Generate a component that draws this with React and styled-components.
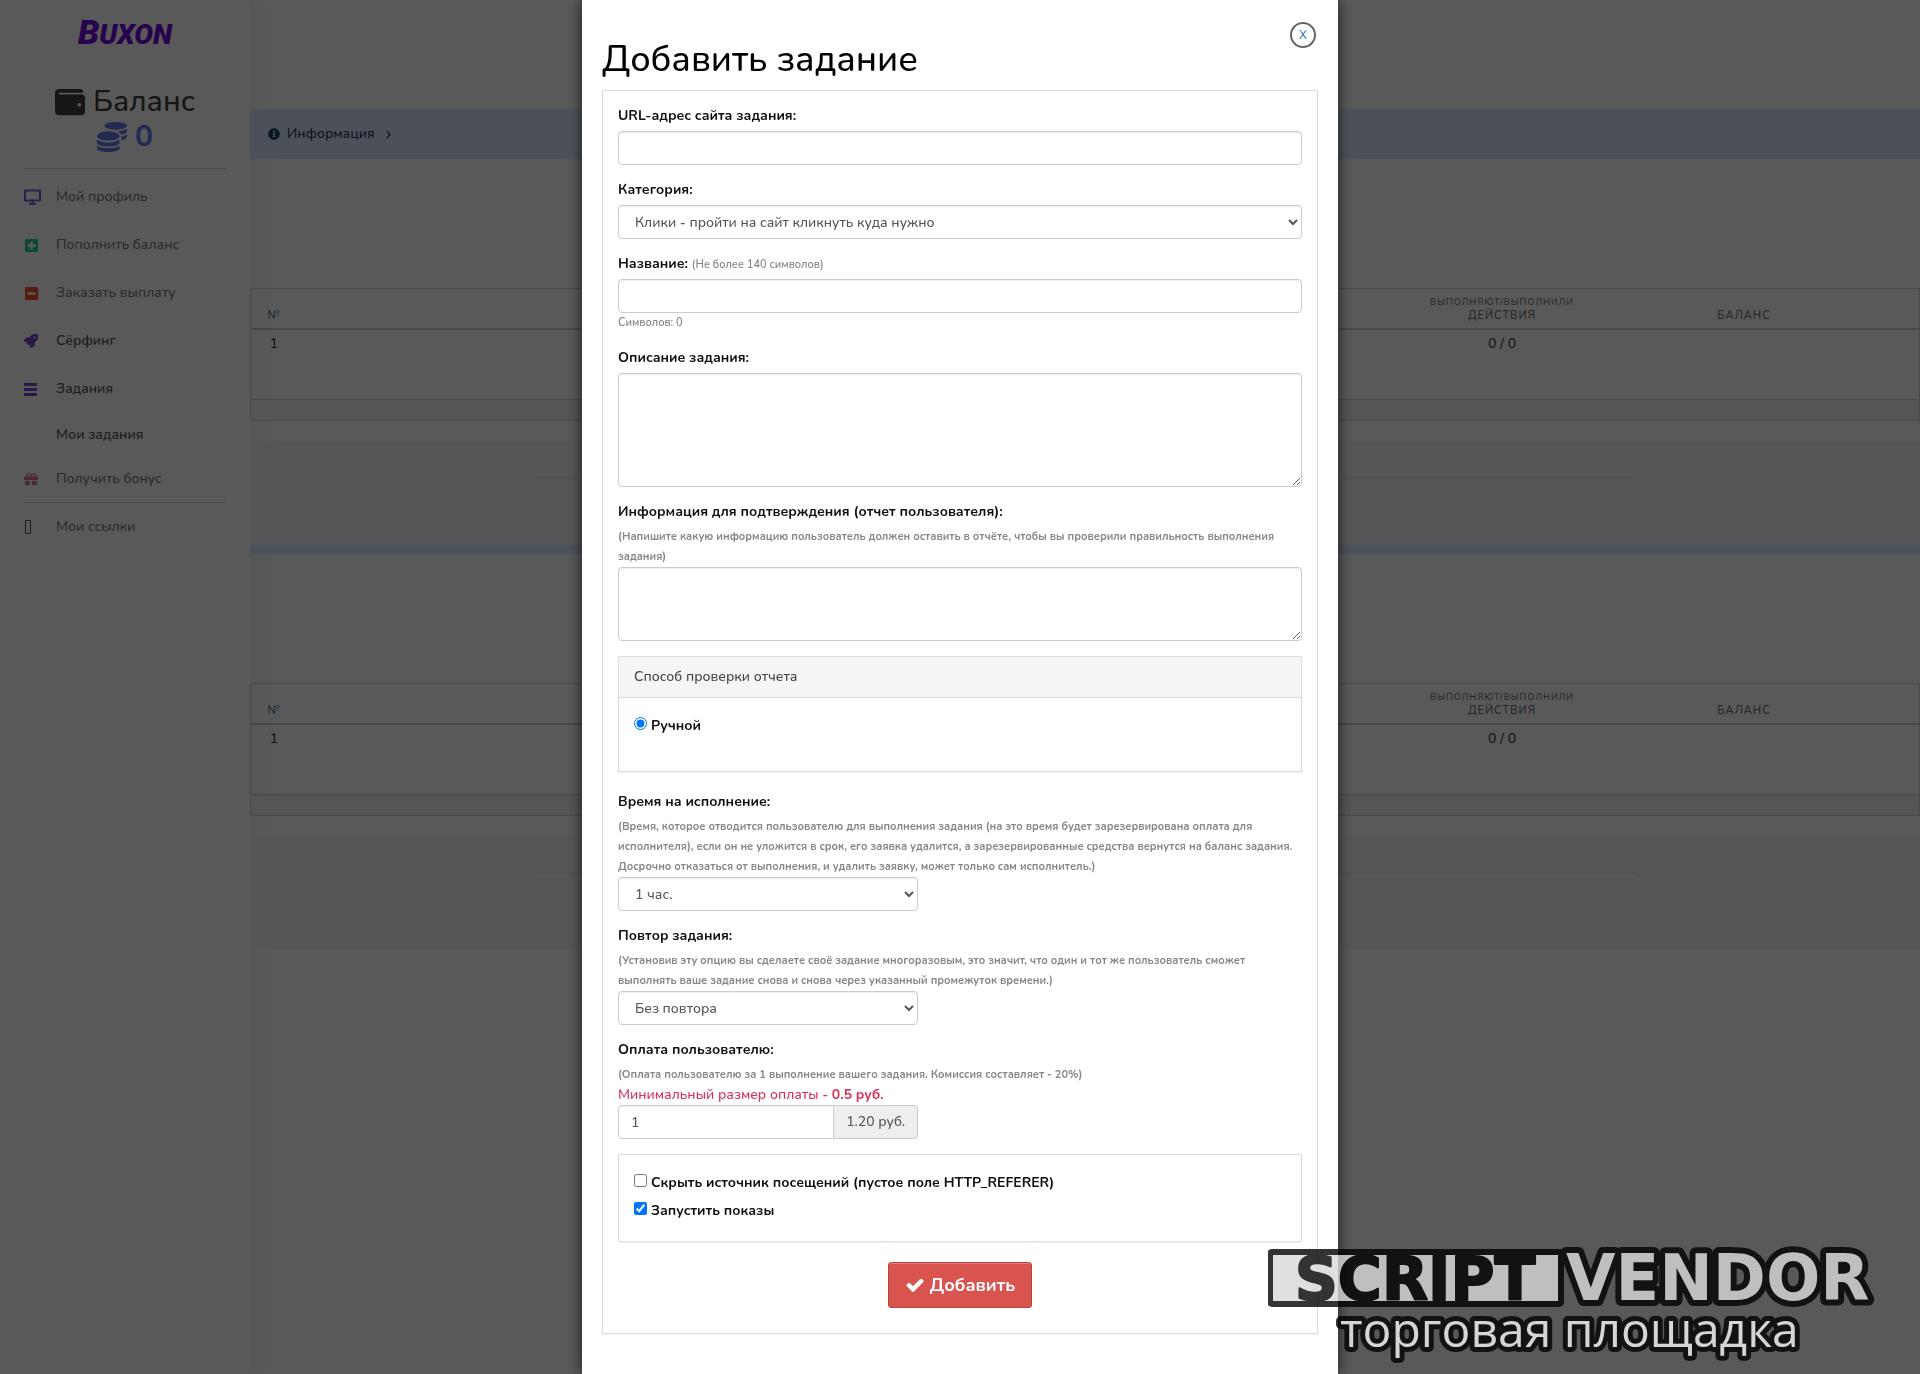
import React from "react";
import styled, { createGlobalStyle } from "styled-components";
import { FaWallet, FaCoins, FaPlusSquare, FaMinusSquare, FaRocket, FaGift, FaInfoCircle } from "react-icons/fa";
import { ChevronRight } from "lucide-react";

const GlobalStyle = createGlobalStyle`
  *, *::before, *::after { box-sizing: border-box; }
  body {
    margin: 0;
    background: #fff;
    color: #525f7f;
    font-family: Nunito, Lato, "Noto Sans", sans-serif;
    font-size: 14px;
    font-weight: 500;
    line-height: 20px;
  }
  button, input, select, textarea { font: inherit; }
`;

const Page = styled.div`
  display: grid;
  grid-template-columns: 250px minmax(0, 1fr);
  min-height: 100vh;
`;

const Sidebar = styled.aside`
  padding: 12px 24px;
  background: #fff;
  box-shadow: 0 0 32px rgba(136, 152, 170, 0.15);
`;

const Logo = styled.a`
  display: flex;
  justify-content: center;
  align-items: baseline;
  height: 40px;
  color: #7006dc;
  font-family: Roboto, sans-serif;
  font-size: 28px;
  font-style: italic;
  font-weight: 900;
  line-height: 40px;
  text-decoration: none;
`;

const LogoInitial = styled.span`
  font-size: 34px;
`;

const Balance = styled.section`
  display: flex;
  flex-direction: column;
  align-items: center;
  padding: 32px 0 14px;
  border-bottom: 1px solid #d9dbe0;
  font-size: 30px;
  line-height: 35px;
`;

const BalanceLine = styled.div`
  display: flex;
  align-items: center;
  gap: 8px;
  color: ${(p) => (p.$accent ? "#6679ea" : "#404040")};
  font-weight: ${(p) => (p.$accent ? 700 : 500)};
`;

const Menu = styled.nav`
  display: flex;
  flex-direction: column;
  padding-top: 4px;
`;

const MenuItem = styled.a`
  display: flex;
  align-items: center;
  height: ${(p) => (p.$compact ? 44 : 48)}px;
  color: ${(p) => (p.$strong ? "#5a5a5a" : "#7a7a7a")};
  font-weight: ${(p) => (p.$strong ? 600 : 500)};
  text-decoration: none;
`;

const MenuIcon = styled.span`
  display: flex;
  width: 32px;
  color: ${(p) => p.$color};
`;

const MenuDivider = styled.hr`
  width: 100%;
  margin: 1px 0 0;
  border: 0;
  border-top: 1px solid #d9dbe0;
`;

const Main = styled.main`
  padding-top: 109px;
`;

const InfoBar = styled.a`
  display: flex;
  align-items: center;
  gap: 7px;
  height: 50px;
  padding: 0 18px;
  background: #dbe9ff;
  color: #28384d;
  text-decoration: none;
`;

const Section = styled.section`
  padding-top: 129px;
`;

const TaskTable = styled.table`
  width: 100%;
  border: 1px solid #d0d3d8;
  border-collapse: separate;
  border-spacing: 0;
  table-layout: fixed;
  text-align: center;
`;

const Col = styled.col`
  width: ${(p) => p.$width || "auto"};
`;

const HeadCell = styled.th`
  height: 41px;
  padding: 0 0 5px;
  border-bottom: 2px solid #c9cdd3;
  color: ${(p) => (p.$link ? "#4a709c" : "#66707f")};
  font-size: 11px;
  font-weight: 500;
  letter-spacing: 1px;
  line-height: 14px;
  text-transform: uppercase;
  vertical-align: bottom;
`;

const HeadNote = styled.small`
  display: block;
  color: #70757d;
  font-size: 9px;
`;

const Cell = styled.td`
  height: 69px;
  padding: 4px 0;
  color: #3b4354;
  vertical-align: top;
`;

const FootCell = styled.td`
  height: 21px;
  border-top: 1px solid #c9cdd3;
  background: #f4f4f4;
`;

const FooterBlock = styled.footer`
  height: 113px;
  margin-top: 20px;
  padding-top: 36px;
  border-bottom: ${(p) => (p.$marked ? "9px solid #dbe9ff" : "0")};
  background: #f5f6fb;
`;

const FooterLine = styled.hr`
  width: 66%;
  margin: 0 auto;
  border: 0;
  border-top: 1px solid #e3e5ec;
`;

const Overlay = styled.div`
  position: fixed;
  inset: 0;
  display: flex;
  justify-content: center;
  align-items: flex-start;
  overflow: auto;
  background: rgba(0, 0, 0, 0.65);
`;

const Modal = styled.section`
  position: relative;
  width: 756px;
  max-width: 100%;
  min-height: 100%;
  padding: 40px 20px 20px;
  background: #fff;
  box-shadow: 0 0 14px rgba(0, 0, 0, 0.7);
  color: #444;
`;

const CloseButton = styled.button`
  position: absolute;
  top: 22px;
  right: 22px;
  width: 26px;
  height: 26px;
  padding: 0;
  border: 2px solid #666;
  border-radius: 50%;
  background: #fff;
  color: #337ab7;
  font-size: 12px;
  line-height: 20px;
`;

const Title = styled.h1`
  margin: 0 0 10px;
  color: #000;
  font-size: 36px;
  font-weight: 500;
  line-height: 40px;
`;

const FormPanel = styled.form`
  margin-bottom: 20px;
  padding: 15px 15px 25px;
  border: 1px solid #ddd;
  box-shadow: 0 1px 1px rgba(0, 0, 0, 0.05);
`;

const Field = styled.div`
  margin-bottom: 15px;
`;

const Label = styled.label`
  display: block;
  margin-bottom: 5px;
  color: #111;
  font-weight: 700;
`;

const Hint = styled.small`
  display: ${(p) => (p.$inline ? "inline" : "block")};
  color: #888;
  font-size: 11px;
  font-weight: ${(p) => (p.$light ? 600 : 700)};
  line-height: ${(p) => (p.$inline ? 16 : 20)}px;
`;

const Warning = styled.div`
  color: #dc3058;
`;

const controlStyles = `
  display: block;
  width: 100%;
  height: 34px;
  padding: 6px 12px;
  border: 1px solid #ccc;
  border-radius: 4px;
  background: #fff;
  box-shadow: inset 0 1px 1px rgba(0, 0, 0, 0.075);
  color: #555;
`;

const Input = styled.input`
  ${controlStyles}
`;

const Select = styled.select`
  ${controlStyles}
  max-width: ${(p) => (p.$narrow ? "300px" : "none")};
`;

const Textarea = styled.textarea`
  ${controlStyles}
  height: ${(p) => (p.$tall ? 114 : 74)}px;
  resize: vertical;
`;

const InputGroup = styled.div`
  display: flex;
  max-width: 300px;

  ${Input} {
    flex: 1;
    min-width: 0;
    border-radius: 4px 0 0 4px;
  }
`;

const Addon = styled.span`
  padding: 6px 12px;
  border: 1px solid #ccc;
  border-left: 0;
  border-radius: 0 4px 4px 0;
  background: #eee;
  color: #555;
`;

const OptionPanel = styled.fieldset`
  min-width: 0;
  margin: 0 0 20px;
  padding: 0;
  border: 1px solid #ddd;
  box-shadow: 0 1px 1px rgba(0, 0, 0, 0.05);
`;

const OptionHeading = styled.div`
  padding: 10px 15px;
  border-bottom: 1px solid #ddd;
  background: #f5f5f5;
  color: #444;
`;

const OptionBody = styled.div`
  padding: 15px 15px ${(p) => (p.$roomy ? 30 : 15)}px;
`;

const OptionRow = styled.label`
  display: flex;
  align-items: flex-start;
  gap: 4px;
  height: 28px;
  color: #111;
  font-weight: 700;
  line-height: 26px;
`;

const Tick = styled.input`
  flex: none;
  width: 13px;
  height: 13px;
  margin: 4px 0 0;
`;

const Actions = styled.div`
  display: flex;
  justify-content: center;
`;

const SubmitButton = styled.button`
  display: flex;
  align-items: center;
  gap: 5px;
  height: 46px;
  padding: 0 16px;
  border: 1px solid #b9423e;
  border-radius: 3px;
  background: #d9534f;
  box-shadow: inset 0 1px 0 rgba(255, 255, 255, 0.25);
  color: #fff;
  font-size: 18px;
  font-weight: 700;
`;

const Watermark = styled.svg`
  position: fixed;
  right: 12px;
  bottom: 0;
  opacity: 0.8;
  pointer-events: none;
`;

const MonitorIcon = () => (
  <svg width="17" height="16" viewBox="0 0 17 16" fill="none" stroke="currentColor" strokeWidth="2">
    <path d="M1 1.5h15v10H1zM8.5 12v3M5 15h7" />
  </svg>
);

const BarsIcon = () => (
  <svg width="13" height="13" viewBox="0 0 13 13" fill="currentColor">
    <path d="M0 0h13v3H0zM0 5h13v3H0zM0 10h13v3H0z" />
  </svg>
);

const MissingIcon = () => (
  <svg width="8" height="14" viewBox="0 0 8 14" fill="none" stroke="currentColor">
    <path d="M1.500.5h5v13h-5z" />
  </svg>
);

const CheckIcon = () => (
  <svg width="20" height="20" viewBox="0 0 1792 1792" fill="currentColor">
    <path d="M1671 566q0 40-28 68l-724 724-136 136q-28 28-68 28t-68-28l-136-136-362-362q-28-28-28-68t28-68l136-136q28-28 68-28t68 28l294 295 656-657q28-28 68-28t68 28l136 136q28 28 28 68z" />
  </svg>
);

const menuItems = [
  { text: "Мой профиль", icon: <MonitorIcon />, color: "#5e62e4" },
  { text: "Пополнить баланс", icon: <FaPlusSquare size={15} />, color: "#2dce89" },
  { text: "Заказать выплату", icon: <FaMinusSquare size={15} />, color: "#f4502c" },
  { text: "Сёрфинг", icon: <FaRocket size={14} />, color: "#7547c8", strong: true },
  { text: "Задания", icon: <BarsIcon />, color: "#7547c8", strong: true },
  { text: "Мои задания", color: "transparent", strong: true, compact: true },
  { text: "Получить бонус", icon: <FaGift size={14} />, color: "#d9788e", compact: true },
];

function Tasks({ marked }) {
  return (
    <Section>
      <TaskTable>
        <colgroup>
          <Col $width="46px" />
          <Col />
          <Col $width="242px" />
          <Col $width="242px" />
          <Col $width="54px" />
        </colgroup>
        <thead>
          <tr>
            <HeadCell $link>№</HeadCell>
            <HeadCell />
            <HeadCell>
              <HeadNote>выполняют/выполнили</HeadNote>
              Действия
            </HeadCell>
            <HeadCell>Баланс</HeadCell>
            <HeadCell />
          </tr>
        </thead>
        <tbody>
          <tr>
            <Cell>1</Cell>
            <Cell />
            <Cell>0 / 0</Cell>
            <Cell />
            <Cell />
          </tr>
        </tbody>
        <tfoot>
          <tr>
            <FootCell colSpan={5} />
          </tr>
        </tfoot>
      </TaskTable>
      <FooterBlock $marked={marked}>
        <FooterLine />
      </FooterBlock>
    </Section>
  );
}

export default function App() {
  return (
    <>
      <GlobalStyle />
      <Page>
        <Sidebar>
          <Logo href="#">
            <LogoInitial>B</LogoInitial>UXON
          </Logo>
          <Balance>
            <BalanceLine>
              <FaWallet size={30} />
              Баланс
            </BalanceLine>
            <BalanceLine $accent>
              <FaCoins size={30} />0
            </BalanceLine>
          </Balance>
          <Menu>
            {menuItems.map((item) => (
              <MenuItem key={item.text} href="#" $strong={item.strong} $compact={item.compact}>
                <MenuIcon $color={item.color}>{item.icon}</MenuIcon>
                {item.text}
              </MenuItem>
            ))}
            <MenuDivider />
            <MenuItem href="#">
              <MenuIcon $color="#555">
                <MissingIcon />
              </MenuIcon>
              Мои ссылки
            </MenuItem>
          </Menu>
        </Sidebar>
        <Main>
          <InfoBar href="#">
            <FaInfoCircle size={12} color="#164560" />
            Информация
            <ChevronRight size={13} />
          </InfoBar>
          <Tasks marked />
          <Tasks />
        </Main>
      </Page>

      <Overlay>
        <Modal role="dialog" aria-labelledby="dialog-title">
          <CloseButton type="button">X</CloseButton>
          <Title id="dialog-title">Добавить задание</Title>
          <FormPanel onSubmit={(e) => e.preventDefault()}>
            <Field>
              <Label htmlFor="url">URL-адрес сайта задания:</Label>
              <Input id="url" type="text" />
            </Field>
            <Field>
              <Label htmlFor="category">Категория:</Label>
              <Select id="category">
                <option>Клики - пройти на сайт кликнуть куда нужно</option>
              </Select>
            </Field>
            <Field>
              <Label htmlFor="name">
                Название: <Hint $inline $light>(Не более 140 символов)</Hint>
              </Label>
              <Input id="name" type="text" maxLength={140} />
              <Hint $light>Символов: 0</Hint>
            </Field>
            <Field>
              <Label htmlFor="description">Описание задания:</Label>
              <Textarea id="description" $tall />
            </Field>
            <Field>
              <Label htmlFor="report">Информация для подтверждения (отчет пользователя):</Label>
              <Hint>
                (Напишите какую информацию пользователь должен оставить в отчёте, чтобы вы проверили правильность выполнения задания)
              </Hint>
              <Textarea id="report" />
            </Field>
            <OptionPanel aria-label="Способ проверки отчета">
              <OptionHeading>Способ проверки отчета</OptionHeading>
              <OptionBody $roomy>
                <OptionRow>
                  <Tick type="radio" name="check" defaultChecked />
                  Ручной
                </OptionRow>
              </OptionBody>
            </OptionPanel>
            <Field>
              <Label htmlFor="duration">Время на исполнение:</Label>
              <Hint>
                (Время, которое отводится пользователю для выполнения задания (на это время будет зарезервирована оплата для исполнителя), если он не уложится в срок, его заявка удалится, а зарезервированные средства вернутся на баланс задания. Досрочно отказаться от выполнения, и удалить заявку, может только сам исполнитель.)
              </Hint>
              <Select id="duration" $narrow>
                <option>1 час.</option>
              </Select>
            </Field>
            <Field>
              <Label htmlFor="repeat">Повтор задания:</Label>
              <Hint>
                (Установив эту опцию вы сделаете своё задание многоразовым, это значит, что один и тот же пользователь сможет выполнять ваше задание снова и снова через указанный промежуток времени.)
              </Hint>
              <Select id="repeat" $narrow>
                <option>Без повтора</option>
              </Select>
            </Field>
            <Field>
              <Label htmlFor="price">Оплата пользователю:</Label>
              <Hint>(Оплата пользователю за 1 выполнение вашего задания. Комиссия составляет - 20%)</Hint>
              <Warning>
                Минимальный размер оплаты - <b>0.5 руб.</b>
              </Warning>
              <InputGroup>
                <Input id="price" type="text" defaultValue="1" />
                <Addon>1.20 руб.</Addon>
              </InputGroup>
            </Field>
            <OptionPanel aria-label="Параметры показа">
              <OptionBody>
                <OptionRow>
                  <Tick type="checkbox" />
                  Скрыть источник посещений (пустое поле HTTP_REFERER)
                </OptionRow>
                <OptionRow>
                  <Tick type="checkbox" defaultChecked />
                  Запустить показы
                </OptionRow>
              </OptionBody>
            </OptionPanel>
            <Actions>
              <SubmitButton type="submit">
                <CheckIcon />
                Добавить
              </SubmitButton>
            </Actions>
          </FormPanel>
        </Modal>
      </Overlay>

      <Watermark width="640" height="148" viewBox="0 -20 640 148" fill="#d9d9d9" stroke="#000" strokeLinejoin="round" paintOrder="stroke">
        <rect x="2" y="6" width="291" height="52" rx="2" strokeWidth="6" paintOrder="fill" />
        <g fontFamily="DejaVu Sans, sans-serif" fontWeight="700">
          <text x="147" y="54" fill="#000" strokeWidth="2" fontSize="60" textAnchor="middle">SCRIPT</text>
          <text x="298" y="54" strokeWidth="12" fontSize="64">VENDOR</text>
        </g>
        <text x="72" y="101" fill="#f4f4f4" strokeWidth="10" fontFamily="Open Sans, sans-serif" fontSize="48">торговая площадка</text>
      </Watermark>
    </>
  );
}
